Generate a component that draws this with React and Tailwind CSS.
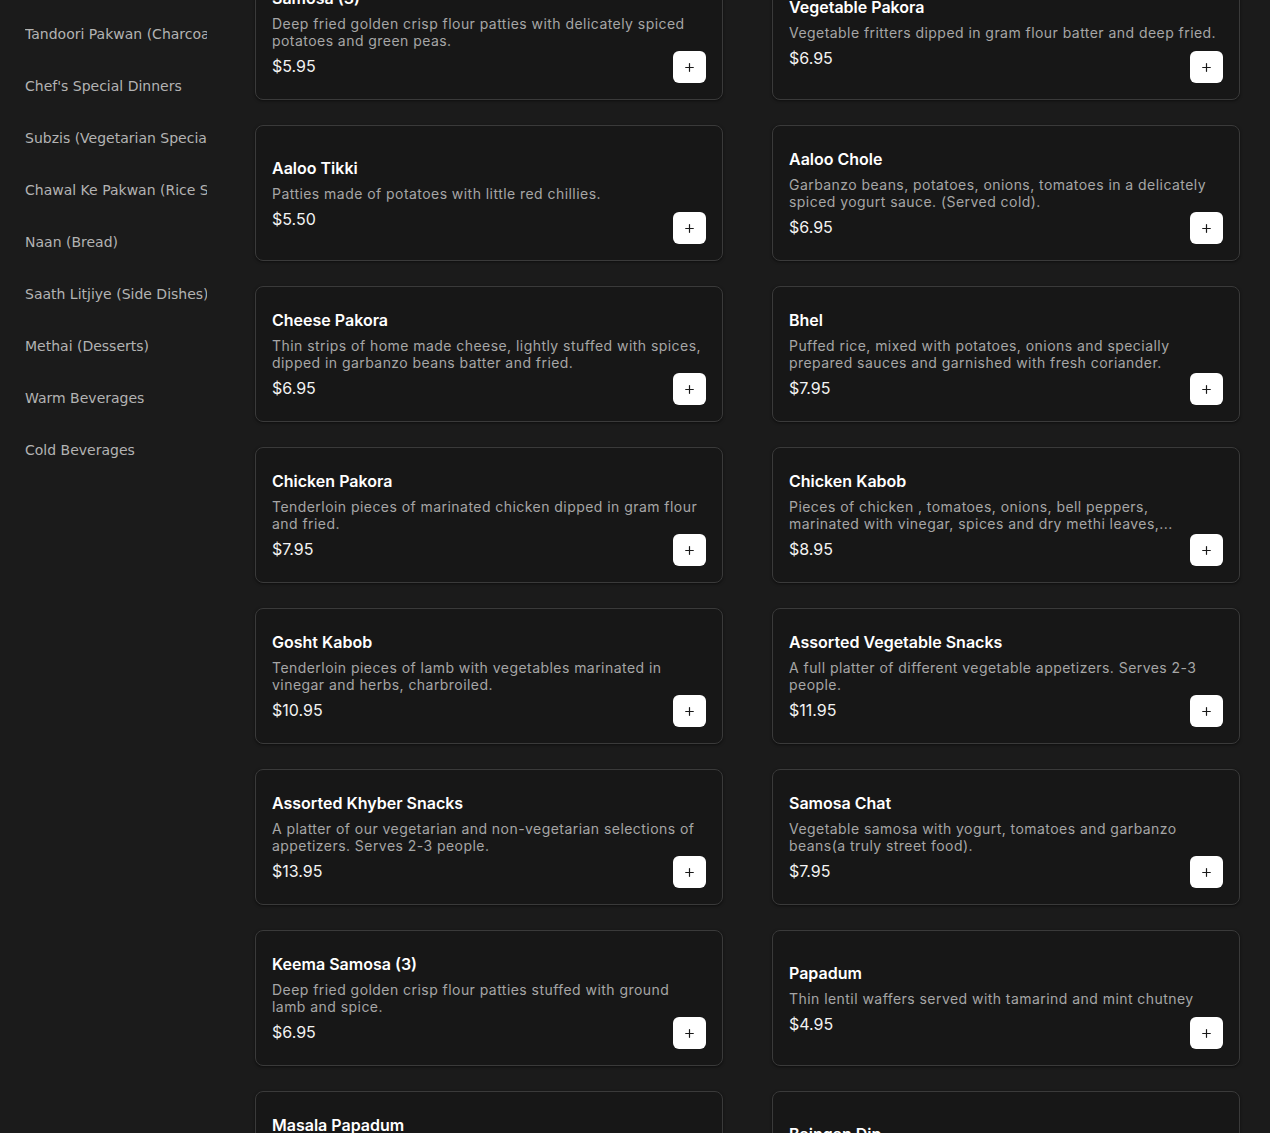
import React from "react";
import { Plus } from "lucide-react";

const categories = [
  "Tandoori Pakwan (Charcoal Specials)",
  "Chef's Special Dinners",
  "Subzis (Vegetarian Specialties)",
  "Chawal Ke Pakwan (Rice Specialties)",
  "Naan (Bread)",
  "Saath Litjiye (Side Dishes)",
  "Methai (Desserts)",
  "Warm Beverages",
  "Cold Beverages",
];

const items = [
  ["Samosa (3)", "Deep fried golden crisp flour patties with delicately spiced potatoes and green peas.", "$5.95"],
  ["Vegetable Pakora", "Vegetable fritters dipped in gram flour batter and deep fried.", "$6.95"],
  ["Aaloo Tikki", "Patties made of potatoes with little red chillies.", "$5.50"],
  ["Aaloo Chole", "Garbanzo beans, potatoes, onions, tomatoes in a delicately spiced yogurt sauce. (Served cold).", "$6.95"],
  ["Cheese Pakora", "Thin strips of home made cheese, lightly stuffed with spices, dipped in garbanzo beans batter and fried.", "$6.95"],
  ["Bhel", "Puffed rice, mixed with potatoes, onions and specially prepared sauces and garnished with fresh coriander.", "$7.95"],
  ["Chicken Pakora", "Tenderloin pieces of marinated chicken dipped in gram flour and fried.", "$7.95"],
  ["Chicken Kabob", "Pieces of chicken , tomatoes, onions, bell peppers, marinated with vinegar, spices and dry methi leaves,...", "$8.95"],
  ["Gosht Kabob", "Tenderloin pieces of lamb with vegetables marinated in vinegar and herbs, charbroiled.", "$10.95"],
  ["Assorted Vegetable Snacks", "A full platter of different vegetable appetizers. Serves 2-3 people.", "$11.95"],
  ["Assorted Khyber Snacks", "A platter of our vegetarian and non-vegetarian selections of appetizers. Serves 2-3 people.", "$13.95"],
  ["Samosa Chat", "Vegetable samosa with yogurt, tomatoes and garbanzo beans(a truly street food).", "$7.95"],
  ["Keema Samosa (3)", "Deep fried golden crisp flour patties stuffed with ground lamb and spice.", "$6.95"],
  ["Papadum", "Thin lentil waffers served with tamarind and mint chutney", "$4.95"],
  ["Masala Papadum", "Thin lentil waffers topped with chopped onions, tomatoes, cilantro and chaat masala.", "$5.95"],
  ["Baingan Dip", "Roasted eggplant dip served with papadum.", "$5.95"],
];

function Card({ title, desc, price }) {
  return (
    <div className="relative flex h-[136px] items-center rounded-lg border border-[#3a3a3a] bg-[#171717] p-4 shadow-[0_1px_3px_rgba(0,0,0,0.5)]">
      <div className="flex w-full flex-col gap-[5px]">
        <div className="text-[16px] font-semibold leading-[24px] text-white">{title}</div>
        <div className="line-clamp-2 text-[14px] leading-[17px] tracking-[0.45px] text-[#a6a6a6]">{desc}</div>
        <div className="text-[16px] leading-[24px] text-[#f2f2f2]">{price}</div>
      </div>
      <button className="absolute bottom-4 right-4 flex h-[32px] w-[33px] items-center justify-center rounded-md bg-white text-[#1a1a1a]">
        <Plus size={13} strokeWidth={2.2} />
      </button>
    </div>
  );
}

export default function App() {
  return (
    <div className="flex min-h-[1133px] w-full items-start overflow-hidden bg-[#1b1b1b]">
      <aside className="w-[232px] shrink-0 pl-[25px] pr-[25px] pt-[8px] font-['DejaVu_Sans',sans-serif]">
        {categories.map((c) => (
          <div key={c} className="flex h-[52px] items-center overflow-hidden whitespace-nowrap text-[14px] text-[#b3b3b3]">
            {c}
          </div>
        ))}
      </aside>
      <main className="ml-[23px] mt-[-36px] grid w-[985px] grid-cols-2 gap-x-[49px] gap-y-[25px] font-['Inter',sans-serif]">
        {items.map(([t, d, p]) => (
          <Card key={t} title={t} desc={d} price={p} />
        ))}
      </main>
    </div>
  );
}
